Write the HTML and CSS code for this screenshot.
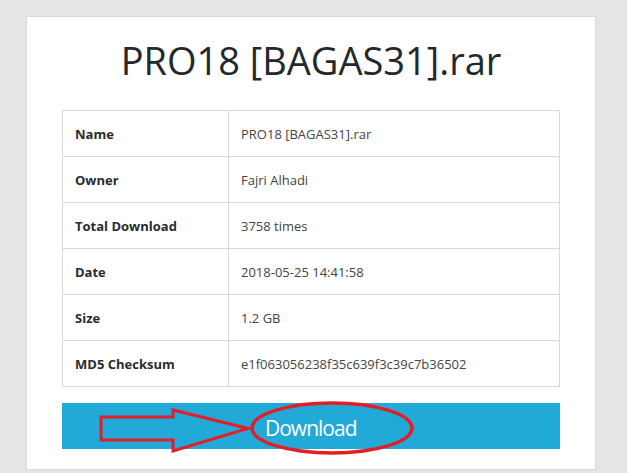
FILE: index.html
```html
<!DOCTYPE html>
<html>
<head>
<meta charset="utf-8">
<link rel="stylesheet" href="styles.css">
</head>
<body>
<div class="card">
  <h1 class="title">PRO18 [BAGAS31].rar</h1>
  <table class="info">
    <tr><th>Name</th><td>PRO18 [BAGAS31].rar</td></tr>
    <tr><th>Owner</th><td>Fajri Alhadi</td></tr>
    <tr><th>Total Download</th><td>3758 times</td></tr>
    <tr><th>Date</th><td>2018-05-25 14:41:58</td></tr>
    <tr><th>Size</th><td>1.2 GB</td></tr>
    <tr><th>MD5 Checksum</th><td>e1f063056238f35c639f3c39c7b36502</td></tr>
  </table>
  <div class="btn-wrap">
    <a class="download" href="#">Download</a>
    <svg class="annot" width="498" height="60" viewBox="0 0 498 60">
      <polygon points="39,16 111,16 111,9 186,27.5 111,50 111,39 39,39" fill="none" stroke="#e41e26" stroke-width="3" stroke-linejoin="miter"/>
      <ellipse cx="270" cy="27" rx="80" ry="25" fill="none" stroke="#e41e26" stroke-width="3.5"/>
    </svg>
  </div>
</div>
</body>
</html>
```
FILE: styles.css
```css
html, body {
  margin: 0;
  padding: 0;
}
body {
  background: #e4e5e7;
  font-family: "Open Sans", "Noto Sans", sans-serif;
  color: #333;
  height: 473px;
  overflow: hidden;
}
.card {
  margin: 16px 0 0 26px;
  width: 498px;
  height: 452px;
  padding: 0 35px;
  background: #fff;
  border: 1px solid #d9dadc;
}
.title {
  margin: 0;
  padding-top: 18px;
  height: 75px;
  font-size: 38px;
  font-weight: 400;
  line-height: 50px;
  text-align: center;
  color: #23282d;
}
.info {
  width: 498px;
  border-collapse: collapse;
  table-layout: fixed;
}
.info th, .info td {
  border: 1px solid #d6d9dd;
  height: 45px;
  padding: 0 12px;
  font-size: 13px;
  text-align: left;
  vertical-align: middle;
}
.info th {
  width: 141px;
  font-weight: 700;
  color: #2b2b2b;
}
.info td {
  color: #444;
}
.btn-wrap {
  position: relative;
  margin-top: 16px;
}
.download {
  display: block;
  height: 46px;
  background: #21a9d8;
  color: #fff;
  text-decoration: none;
  font-size: 21px;
  letter-spacing: -1px;
  line-height: 50px;
  padding-left: 203px;
  overflow: hidden;
}
.annot {
  position: absolute;
  left: 0;
  top: -2px;
}
```
